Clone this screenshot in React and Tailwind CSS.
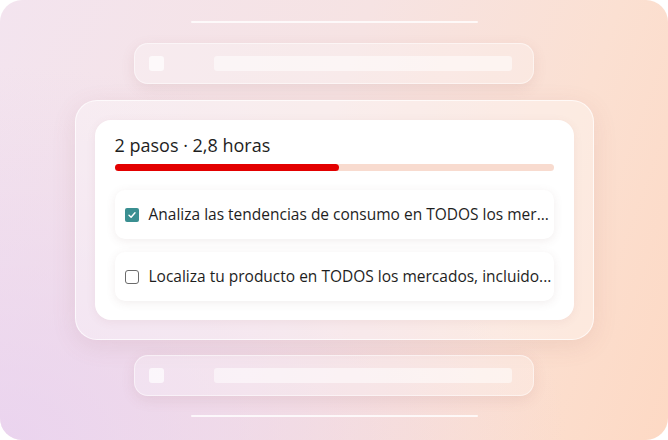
import React from "react";

function GhostRow() {
  return (
    <div className="mx-auto flex h-[41px] w-[400px] items-center gap-[50px] rounded-[14px] border border-white/50 bg-white/25 pl-[14px] pr-[21px] shadow-[0_4px_14px_rgba(160,90,90,0.12)]">
      <div className="h-[15px] w-[15px] rounded-[3px] bg-white/70" />
      <div className="h-[15px] flex-1 rounded-[3px] bg-white/50" />
    </div>
  );
}

function Task({ done, text }) {
  return (
    <div className="flex h-[49px] items-center gap-[10px] rounded-[10px] bg-white pl-[10px] pr-[8px] shadow-[0_2px_10px_rgba(120,80,80,0.10)]">
      {done ? (
        <div className="flex h-[14px] w-[14px] shrink-0 items-center justify-center rounded-[2px] bg-[#3a8f91]">
          <svg width="10" height="10" viewBox="0 0 10 10" fill="none">
            <path d="M2 5.2 L4.1 7.2 L8 2.8" stroke="white" strokeWidth="1.4" strokeLinecap="round" strokeLinejoin="round" />
          </svg>
        </div>
      ) : (
        <div className="h-[14px] w-[14px] shrink-0 rounded-[3px] border-[1.5px] border-[#6b6b6b]" />
      )}
      <span className="whitespace-nowrap text-[15.5px] text-[#1e1e1e]">{text}</span>
    </div>
  );
}

export default function App() {
  return (
    <div
      className="relative flex h-[440px] w-[668px] flex-col overflow-hidden rounded-[22px] bg-[linear-gradient(110deg,#f3e4ef_0%,#f6e3e3_45%,#fbe0d2_75%,#fdd9c4_100%)]"
      style={{ fontFamily: '"Open Sans", "Noto Sans", sans-serif' }}
    >
      <div className="pointer-events-none absolute inset-0 bg-[radial-gradient(ellipse_at_0%_100%,rgba(232,208,240,0.8)_0%,rgba(232,208,240,0)_60%)]" />
      <div className="relative flex flex-col pt-[21px]">
        <div className="mx-auto h-[2px] w-[287px] rounded bg-white/80" />
        <div className="mt-[20px]">
          <GhostRow />
        </div>
        <div className="mx-auto mt-[16px] w-[519px] rounded-[22px] border border-white/70 bg-white/35 p-[19px] shadow-[0_6px_24px_rgba(160,90,90,0.12)]">
          <div className="rounded-[16px] bg-white px-[20px] pb-[19px] pt-[12px] shadow-[0_2px_10px_rgba(150,90,90,0.08)]">
            <div className="text-[18px] leading-[26px] text-[#1e1e1e]">2 pasos · 2,8 horas</div>
            <div className="mt-[6px] h-[7px] w-full rounded-full bg-[#f8dbcf]">
              <div className="h-[7px] w-[224px] rounded-full bg-[#e30000]" />
            </div>
            <div className="mt-[19px] flex flex-col gap-[13px]">
              <Task done text="Analiza las tendencias de consumo en TODOS los mer..." />
              <Task text="Localiza tu producto en TODOS los mercados, incluido..." />
            </div>
          </div>
        </div>
        <div className="mt-[15px]">
          <GhostRow />
        </div>
        <div className="mx-auto mt-[19px] h-[2px] w-[287px] rounded bg-white/80" />
      </div>
    </div>
  );
}
